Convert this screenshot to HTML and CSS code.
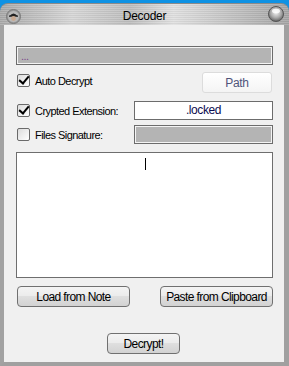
FILE: index.html
```html
<!DOCTYPE html>
<html>
<head>
<meta charset="utf-8">
<link rel="stylesheet" href="styles.css">
</head>
<body>
<div class="window">
  <div class="titlebar">
    <span class="ticon left">
      <svg width="15" height="15" viewBox="0 0 15 15">
        <circle cx="7.5" cy="7.5" r="7" fill="#9a9a9a" stroke="#7a7a7a"/>
        <circle cx="7.5" cy="7.5" r="5.5" fill="#b9b9b9"/>
        <path d="M3.5 7 Q7.5 2 11.5 7 Z" fill="#222"/>
        <rect x="3" y="6.5" width="9" height="1.3" fill="#222"/>
        <circle cx="7.5" cy="9.5" r="2.4" fill="#c8a890"/>
      </svg>
    </span>
    <span class="title">Decoder</span>
    <span class="ticon right">
      <svg width="16" height="16" viewBox="0 0 16 16">
        <defs>
          <radialGradient id="g" cx="50%" cy="40%" r="60%">
            <stop offset="0" stop-color="#f4f4f4"/>
            <stop offset="0.6" stop-color="#a8a8a8"/>
            <stop offset="1" stop-color="#606060"/>
          </radialGradient>
        </defs>
        <circle cx="8" cy="8" r="7.5" fill="url(#g)" stroke="#555"/>
        <ellipse cx="8" cy="5" rx="4" ry="2.3" fill="#fff" opacity="0.8"/>
      </svg>
    </span>
  </div>
  <div class="frame">
    <div class="content">
      <div class="path-input"><span>...</span></div>
      <div class="row auto">
        <label class="chk"><span class="box checked"></span>Auto Decrypt</label>
        <button class="path-btn">Path</button>
      </div>
      <div class="row field">
        <label class="chk"><span class="box checked"></span>Crypted Extension:</label>
        <div class="input white">.locked</div>
      </div>
      <div class="row field">
        <label class="chk"><span class="box"></span>Files Signature:</label>
        <div class="input grey"></div>
      </div>
      <div class="textarea"><span class="caret"></span></div>
      <div class="row buttons">
        <button class="btn wide">Load from Note</button>
        <button class="btn wide">Paste from Clipboard</button>
      </div>
      <div class="row center">
        <button class="btn small">Decrypt!</button>
      </div>
    </div>
  </div>
</div>
</body>
</html>
```

FILE: styles.css
```css
html, body {
  margin: 0;
  padding: 0;
}
body {
  background: #0e92e4;
  width: 289px;
  height: 366px;
  overflow: hidden;
  font-family: "Liberation Sans", Arial, sans-serif;
}
.window {
  margin-top: 3px;
  height: 363px;
  display: flex;
  flex-direction: column;
}
.titlebar {
  height: 22px;
  border-radius: 8px 8px 0 0;
  background:
    repeating-linear-gradient(180deg, rgba(255,255,255,0.12) 0 1px, rgba(0,0,0,0.04) 1px 2px),
    linear-gradient(90deg, #a9a9a9 0%, #d6d6d6 25%, #bdbdbd 45%, #e0e0e0 60%, #c2c2c2 80%, #a4a4a4 100%);
  border-top: 1px solid #8a8a8a;
  display: flex;
  align-items: center;
  justify-content: space-between;
  padding: 0 5px 0 6px;
  box-sizing: border-box;
}
.ticon { display: flex; }
.ticon.left { margin-top: 3px; }
.ticon.right { margin-top: -2px; }
.title {
  font-size: 12px;
  letter-spacing: -0.3px;
  color: #000;
  margin-top: 2px;
}
.frame {
  flex: 1;
  display: flex;
  background: #f0f0f0;
  border-left: 4px solid #a2a2a2;
  border-right: 5px solid #a0a0a0;
  border-bottom: 4px solid #a0a0a0;
}
.content {
  flex: 1;
  padding: 21px 11px 0 12px;
  display: flex;
  flex-direction: column;
  font-size: 11px;
  letter-spacing: -0.55px;
  color: #000;
}
.path-input {
  height: 19px;
  box-sizing: border-box;
  border: 1px solid #6c6c6c;
  box-shadow: inset 0 0 0 1px #f4f4f4;
  background: #b4b4b4;
  padding: 3px 4px 0;
  color: #7c4a8c;
  line-height: 12px;
}
.row { display: flex; align-items: center; }
.auto {
  margin-top: 7px;
  justify-content: space-between;
  align-items: flex-start;
}
.chk {
  display: flex;
  align-items: center;
  gap: 5px;
  margin-left: 1px;
}
.box {
  width: 11px;
  height: 11px;
  border: 1px solid #6a6a6a;
  border-radius: 2px;
  background: linear-gradient(135deg, #dcdcdc, #ffffff);
  position: relative;
}
.box.checked::after {
  content: "";
  position: absolute;
  left: 3px;
  top: -1px;
  width: 4px;
  height: 8px;
  border: solid #000;
  border-width: 0 2px 2px 0;
  transform: rotate(40deg);
}
.auto .chk { margin-top: 2px; }
.path-btn {
  width: 70px;
  height: 21px;
  margin-right: 1px;
  border: 1px solid #dcdcdc;
  border-radius: 3px;
  background: linear-gradient(#ffffff, #f4f4f4);
  color: #50547a;
  font-family: "Liberation Sans", Arial, sans-serif;
  font-size: 12px;
  letter-spacing: -0.3px;
  padding: 0;
}
.field {
  justify-content: space-between;
  height: 19px;
}
.row.field:nth-of-type(3) { margin-top: 8px; }
.row.field:nth-of-type(4) { margin-top: 5px; }
.input {
  width: 139px;
  height: 19px;
  box-sizing: border-box;
  border: 1px solid #6c6c6c;
  text-align: center;
  line-height: 17px;
  font-size: 12px;
  letter-spacing: -0.4px;
  color: #0c0c50;
}
.input.white { background: #fff; }
.input.grey { background: #b4b4b4; box-shadow: inset 0 0 0 1px #f4f4f4; }
.textarea {
  margin-top: 8px;
  height: 126px;
  box-sizing: border-box;
  border: 1px solid #6e6e6e;
  background: #fff;
  position: relative;
}
.caret {
  position: absolute;
  left: 128px;
  top: 5px;
  width: 1px;
  height: 12px;
  background: #000;
}
.buttons {
  margin-top: 8px;
  justify-content: space-between;
  padding: 0 0 0 1px;
}
.btn {
  height: 21px;
  border: 1px solid #707070;
  border-radius: 4px;
  background: linear-gradient(#f4f4f4 0%, #ececec 45%, #dfdfdf 50%, #d2d2d2 100%);
  font-family: "Liberation Sans", Arial, sans-serif;
  font-size: 12px;
  letter-spacing: -0.6px;
  white-space: nowrap;
  color: #000;
  padding: 0;
}
.btn.wide { width: 113px; }
.btn.small { width: 73px; }
.center { justify-content: center; margin-top: 26px; padding-right: 2px; }
```
